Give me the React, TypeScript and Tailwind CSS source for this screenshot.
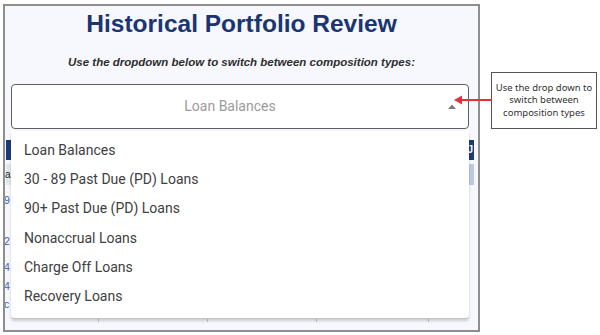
import React from "react";

const items = [
  "Loan Balances",
  "30 - 89 Past Due (PD) Loans",
  "90+ Past Due (PD) Loans",
  "Nonaccrual Loans",
  "Charge Off Loans",
  "Recovery Loans",
];

export default function App() {
  return (
    <div className="relative flex h-[335px] w-[600px] items-start overflow-hidden bg-white">
      {/* Main frame */}
      <div className="relative ml-[3px] mt-[4px] flex h-[328px] w-[477px] flex-col overflow-hidden border-2 border-[#8e8e8e] bg-[#f7f8fe]">
        <div
          className="h-[35px] text-center text-[24.5px] font-bold leading-[35px] text-[#1a3570]"
          style={{ fontFamily: '"Liberation Sans", Arial, sans-serif' }}
        >
          Historical Portfolio Review
        </div>
        <div
          className="mt-[13px] h-[16px] text-center text-[11.5px] font-bold italic leading-[16px] text-[#2e2e2e]"
          style={{ fontFamily: '"Liberation Sans", Arial, sans-serif' }}
        >
          Use the dropdown below to switch between composition types:
        </div>
        {/* Select box */}
        <div
          className="ml-[6px] mt-[14px] flex h-[45px] w-[458px] shrink-0 items-center rounded-[4px] border border-[#5e5e5e] bg-white"
          style={{ fontFamily: 'Roboto, "Noto Sans", sans-serif' }}
        >
          <div className="flex-1 pl-[0px] text-center text-[14px] text-[#9b9b9b]">Loan Balances</div>
          <div className="mr-[12px] flex w-[8px] items-center justify-center">
            <svg width="8" height="5" viewBox="0 0 8 5">
              <polygon points="0,5 4,0.5 8,5" fill="#7a7a7a" />
            </svg>
          </div>
        </div>
        {/* Table behind the open menu */}
        <div className="ml-[1px] mt-[11px] w-[468px] shrink-0">
          <div className="flex h-[20px] items-center justify-end bg-[#1b3a78] pr-[1px]">
            <span className="text-[10px] font-bold leading-none text-white" style={{ fontFamily: '"Liberation Sans", Arial, sans-serif' }}>
              J
            </span>
          </div>
          <div className="mt-[4px] flex h-[21px]">
            <div className="flex w-[93px] items-center bg-[#e3e6ed]">
              <span className="-ml-[1px] text-[10px] text-[#223] " style={{ fontFamily: '"Liberation Sans", Arial, sans-serif' }}>
                a
              </span>
            </div>
            <div className="flex-1 bg-[#b9cbe8]" />
          </div>
          <div
            className="grid h-[137px] grid-cols-[93px_109px_109px_112px_45px] text-[10.5px] leading-[13px] text-[#3d5fb3]"
            style={{ fontFamily: '"Liberation Sans", Arial, sans-serif' }}
          >
            <div className="flex flex-col border-r border-[#c9c9c9]">
              <span className="-ml-[2px] mt-[9px]">9</span>
              <span className="-ml-[2px] mt-[28px]">2</span>
              <span className="-ml-[2px] mt-[13px]">4</span>
              <span className="-ml-[2px] mt-[6px]">4</span>
              <span className="-ml-[2px] mt-[5px]">c</span>
            </div>
            <div className="border-r border-[#c9c9c9]" />
            <div className="border-r border-[#c9c9c9]" />
            <div className="border-r border-[#c9c9c9]" />
            <div />
          </div>
        </div>

        {/* Open dropdown menu (overlay) */}
        <div
          className="absolute left-[6px] top-[125px] flex h-[188px] w-[458px] flex-col rounded-b-[4px] border-b border-[#c4c4c4] bg-white pb-[7px] pt-[5px] shadow-[0_2px_3px_rgba(0,0,0,0.18)]"
          style={{ fontFamily: 'Roboto, "Noto Sans", sans-serif' }}
        >
          {items.map((t) => (
            <div key={t} className="flex h-[29.4px] items-center pl-[13px] text-[14px] text-[#404040]">
              {t}
            </div>
          ))}
        </div>
      </div>

      {/* Annotation callout */}
      <div
        className="ml-[11px] mt-[72px] flex h-[57px] w-[106px] items-center justify-center border border-[#555] bg-white text-center text-[9.5px] leading-[12.5px] text-[#333]"
        style={{ fontFamily: '"Noto Sans", "Open Sans", sans-serif' }}
      >
        <div>
          Use the drop down to
          <br />
          switch between
          <br />
          composition types
        </div>
      </div>

      {/* Red arrow */}
      <svg className="absolute left-[454px] top-[94px]" width="38" height="12" viewBox="0 0 38 12">
        <line x1="5" y1="6" x2="38" y2="6" stroke="#e53238" strokeWidth="1.8" />
        <polygon points="0,6 8,1.5 8,10.5" fill="#e53238" />
      </svg>
    </div>
  );
}
